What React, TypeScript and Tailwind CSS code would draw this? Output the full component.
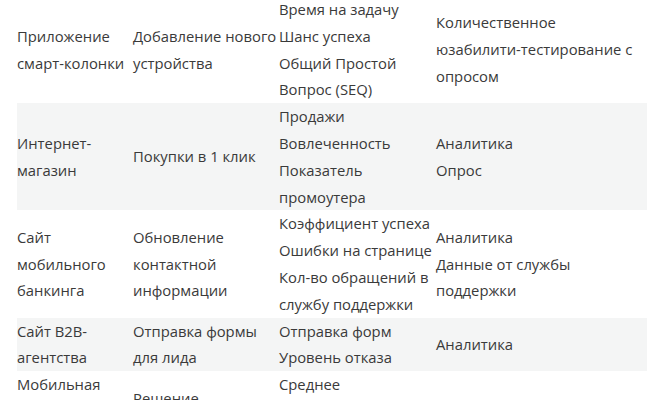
const rows: { a: string; b: string; c: string[]; d: string[] }[] = [
  {
    a: 'Приложение смарт-колонки',
    b: 'Добавление нового устройства',
    c: ['Время на задачу', 'Шанс успеха', 'Общий Простой Вопрос (SEQ)'],
    d: ['Количественное юзабилити-тестирование с опросом'],
  },
  {
    a: 'Интернет-магазин',
    b: 'Покупки в 1 клик',
    c: ['Продажи', 'Вовлеченность', 'Показатель промоутера'],
    d: ['Аналитика', 'Опрос'],
  },
  {
    a: 'Сайт мобильного банкинга',
    b: 'Обновление контактной информации',
    c: ['Коэффициент успеха', 'Ошибки на странице', 'Кол-во обращений в службу поддержки'],
    d: ['Аналитика', 'Данные от службы поддержки'],
  },
  {
    a: 'Сайт B2B-агентства',
    b: 'Отправка формы для лида',
    c: ['Отправка форм', 'Уровень отказа'],
    d: ['Аналитика'],
  },
  {
    a: 'Мобильная игра-головоломка',
    b: 'Решение головоломки',
    c: ['Среднее\nвремя игры', 'Удержание'],
    d: ['Аналитика'],
  },
];

export default function App() {
  return (
    <div
      className="h-[400px] w-[666px] overflow-hidden bg-white pl-[17px] text-[14.8px] leading-[26.8px] text-[#3a3a3a]"
      style={{ fontFamily: '"Open Sans", "Noto Sans", sans-serif' }}
    >
      <table className="-mt-[4px] w-[630px] table-fixed border-collapse">
        <colgroup>
          <col className="w-[116px]" />
          <col className="w-[146px]" />
          <col className="w-[157px]" />
          <col className="w-[211px]" />
        </colgroup>
        <tbody>
          {rows.map((r, i) => (
            <tr key={i} className={i % 2 === 1 ? 'bg-[#f4f5f5]' : ''}>
              <td className="p-0 align-middle">{r.a}</td>
              <td className="p-0 align-middle">{r.b}</td>
              <td className="p-0 align-middle">
                {r.c.map((t, j) => (
                  <div key={j} className="whitespace-pre-line">
                    {t}
                  </div>
                ))}
              </td>
              <td className="p-0 pr-[8px] align-middle">
                {r.d.map((t, j) => (
                  <div key={j}>{t}</div>
                ))}
              </td>
            </tr>
          ))}
        </tbody>
      </table>
    </div>
  );
}
